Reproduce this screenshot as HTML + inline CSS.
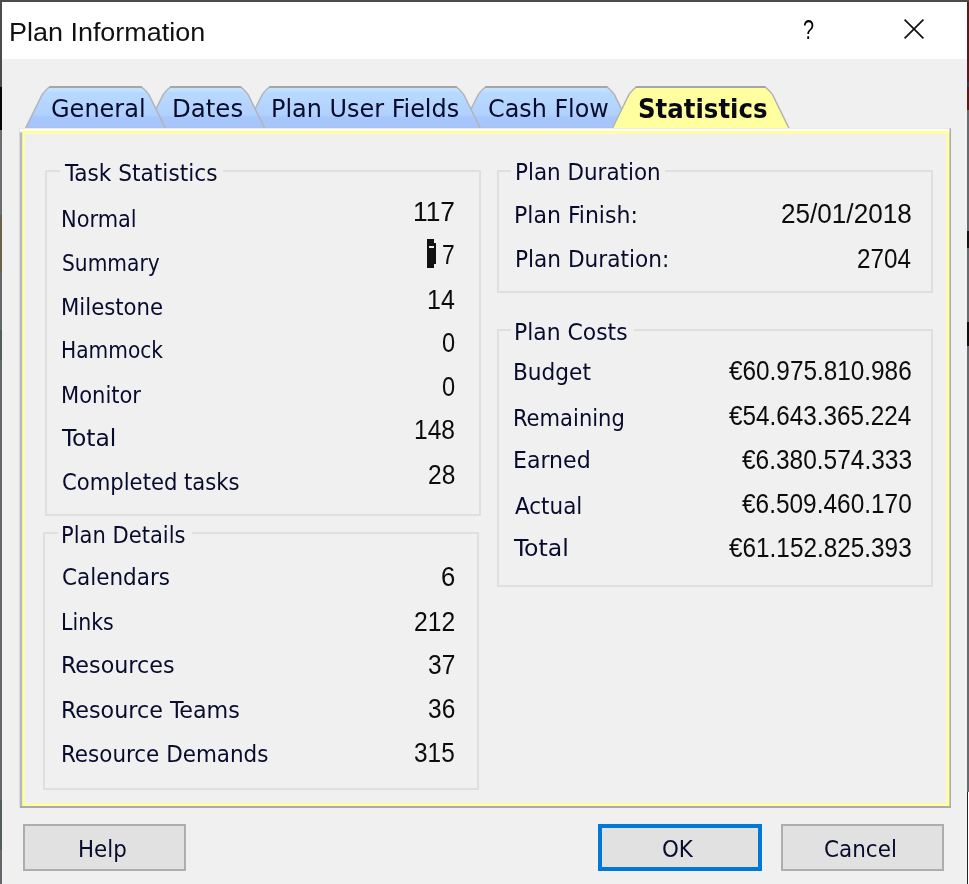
<!DOCTYPE html>
<html lang="en">
<head>
<meta charset="utf-8">
<title>Plan Information</title>
<style>
html,body{margin:0;padding:0}
body{width:969px;height:884px;overflow:hidden;background:#f0f0f0;position:relative;font-family:"Liberation Sans",sans-serif}
#win{position:absolute;left:0;top:0;width:969px;height:884px;overflow:hidden;background:#f0f0f0}
#client{position:absolute;left:0;top:0;width:969px;height:884px;filter:blur(0.4px)}
.abs{position:absolute}
.t{position:absolute;white-space:nowrap;transform-origin:0 0;display:block}
#edge-top{left:0;top:0;width:969px;height:2px;background:#4b4b4b}
#edge-left{left:0;top:0;width:2px;height:884px;background:linear-gradient(#4b4b4b 0,#4b4b4b 87px,#080808 87px,#080808 130px,#6a6e72 130px,#6a6e72 215px,#6b6148 215px,#6b6148 272px,#63676b 272px,#63676b 330px,#4f5f55 330px,#4f5f55 360px,#63676b 360px,#63676b 800px,#4f5f55 800px,#4f5f55 850px,#63676b 850px)}
#edge-right{left:967px;top:0;width:2px;height:884px;background:linear-gradient(#4b4b4b 0,#4b4b4b 2px,#5c1b1b 2px,#5c1b1b 82px,#3a3550 82px,#3a3550 87px,#5c1b1b 87px,#5c1b1b 110px,#676b70 110px,#676b70 231px,#151515 231px,#151515 248px,#676b70 248px,#676b70 322px,#101010 322px,#101010 346px,#676b70 346px,#676b70 792px,#222 792px,#222 884px)}
#edge-right2{left:968px;top:792px;width:1px;height:92px;background:#fff}
#titlebar{left:2px;top:2px;width:965px;height:57px;background:#fff}
.grp{position:absolute;box-sizing:border-box;border:2px solid #dfdfdf}
.gcap{position:absolute;background:#f0f0f0;height:6px}
.btn{position:absolute;box-sizing:border-box;border:2px solid #adadad;background:#e1e1e1}
.btn.def{border:4px solid #0078d7}
</style>
</head>
<body>
<div id="win">
<div id="client">

<svg class="abs" id="tabs" style="left:0;top:80px" width="969" height="52" viewBox="0 80 969 52">
<defs><linearGradient id="tg" x1="0" y1="0" x2="0" y2="1"><stop offset="0" stop-color="#c4e4ff"/><stop offset="0.1" stop-color="#bfe0ff"/><stop offset="0.14" stop-color="#b8d9ff"/><stop offset="0.66" stop-color="#b1d1fe"/><stop offset="0.74" stop-color="#a7c7fc"/><stop offset="1" stop-color="#a6c6fb"/></linearGradient></defs>
<path d="M461.5 128.6 L478.3 94.4 Q483.1 88.5 486.1 86.9 L606.5 86.9 Q609.5 88.5 614.3 94.4 L631.1 128.6 Z" fill="url(#tg)" stroke="#b2b4ba" stroke-width="1.5"/>
<path d="M485.1 87 L607.5 87" stroke="#a6a6a6" stroke-width="2" fill="none"/>
<path d="M245.5 128.6 L262.3 94.4 Q267.1 88.5 270.1 86.9 L455.9 86.9 Q458.9 88.5 463.7 94.4 L480.5 128.6 Z" fill="url(#tg)" stroke="#b2b4ba" stroke-width="1.5"/>
<path d="M269.1 87 L456.9 87" stroke="#a6a6a6" stroke-width="2" fill="none"/>
<path d="M146.4 128.6 L163.2 94.4 Q168.0 88.5 171.0 86.9 L240.2 86.9 Q243.2 88.5 248.0 94.4 L264.8 128.6 Z" fill="url(#tg)" stroke="#b2b4ba" stroke-width="1.5"/>
<path d="M170.0 87 L241.2 87" stroke="#a6a6a6" stroke-width="2" fill="none"/>
<path d="M25.4 128.6 L42.2 94.4 Q47.0 88.5 50.0 86.9 L141.0 86.9 Q144.0 88.5 148.8 94.4 L165.6 128.6 Z" fill="url(#tg)" stroke="#b2b4ba" stroke-width="1.5"/>
<path d="M49.0 87 L142.0 87" stroke="#a6a6a6" stroke-width="2" fill="none"/>
<path d="M611.6 130.0 L629.0 94.4 Q633.8 88.5 636.8 86.9 L764.6 86.9 Q767.6 88.5 772.4 94.4 L789.8 130.0 Z" fill="#ffff9f" stroke="#b4b4ae" stroke-width="1.5"/>
<path d="M635.8 87 L765.6 87" stroke="#a6a6a0" stroke-width="2" fill="none"/>
</svg>

<svg class="abs" id="panel" style="left:0;top:120px" width="969" height="700" viewBox="0 120 969 700">
<rect x="19.8" y="128.3" width="931.2" height="679.7" fill="#aaaab0"/>
<rect x="19.8" y="128.3" width="929.6" height="677.7" fill="#b8b8bc"/>
<rect x="19.8" y="128.3" width="929.6" height="4" fill="#ffffff"/>
<rect x="22.2" y="130.7" width="927.2" height="675.3" fill="#ffff9e"/>
<rect x="24.7" y="133.8" width="921.7" height="669.6" fill="#f0f0f0"/>
</svg>

<!-- group boxes -->
<div class="grp" style="left:45px;top:170px;width:436px;height:346px"></div>
<div class="grp" style="left:43px;top:532px;width:436px;height:258px"></div>
<div class="grp" style="left:497px;top:170px;width:436px;height:123px"></div>
<div class="grp" style="left:497px;top:329px;width:436px;height:258px"></div>
<div class="gcap" style="left:60px;top:168px;width:163px"></div>
<div class="gcap" style="left:58px;top:530px;width:134px"></div>
<div class="gcap" style="left:511px;top:168px;width:154px"></div>
<div class="gcap" style="left:511px;top:327px;width:123px"></div>

<!-- text cursor block over the "1" of 17 -->


<!-- buttons -->
<div class="btn" style="left:23px;top:824px;width:163px;height:47px"></div>
<div class="btn def" style="left:598px;top:824px;width:164px;height:47px"></div>
<div class="btn" style="left:781px;top:824px;width:163px;height:47px"></div>

<span class="t" style='left:51.15px;top:96.24px;font:400 25.5px/25.5px "DejaVu Sans Condensed", "Liberation Sans", sans-serif;color:#080c2c;transform:scaleX(1.0463)'>General</span>
<span class="t" style='left:172.30px;top:96.45px;font:400 25.5px/25.5px "DejaVu Sans Condensed", "Liberation Sans", sans-serif;color:#080c2c;transform:scaleX(1.0653)'>Dates</span>
<span class="t" style='left:271.31px;top:96.24px;font:400 25.5px/25.5px "DejaVu Sans Condensed", "Liberation Sans", sans-serif;color:#080c2c;transform:scaleX(1.0430)'>Plan User Fields</span>
<span class="t" style='left:488.11px;top:96.25px;font:400 25.5px/25.5px "DejaVu Sans Condensed", "Liberation Sans", sans-serif;color:#080c2c;transform:scaleX(1.0396)'>Cash Flow</span>
<span class="t" style='left:637.96px;top:94.87px;font:700 27px/27px "DejaVu Sans Condensed", "Liberation Sans", sans-serif;color:#0a0a14;transform:scaleX(1.0062)'>Statistics</span>
<span class="t" style='left:65.43px;top:161.55px;font:400 23.5px/23.5px "DejaVu Sans Condensed", "Liberation Sans", sans-serif;color:#080c2c;transform:scaleX(1.0259)'>Task Statistics</span>
<span class="t" style='left:60.81px;top:523.86px;font:400 23.5px/23.5px "DejaVu Sans Condensed", "Liberation Sans", sans-serif;color:#080c2c;transform:scaleX(0.9965)'>Plan Details</span>
<span class="t" style='left:514.57px;top:160.65px;font:400 23.5px/23.5px "DejaVu Sans Condensed", "Liberation Sans", sans-serif;color:#080c2c;transform:scaleX(1.0149)'>Plan Duration</span>
<span class="t" style='left:514.43px;top:321.19px;font:400 23.5px/23.5px "DejaVu Sans Condensed", "Liberation Sans", sans-serif;color:#080c2c;transform:scaleX(1.0350)'>Plan Costs</span>
<span class="t" style='left:60.78px;top:207.83px;font:400 23px/23px "DejaVu Sans Condensed", "Liberation Sans", sans-serif;color:#080c2c;transform:scaleX(1.0116)'>Normal</span>
<span class="t" style='left:61.66px;top:251.62px;font:400 23px/23px "DejaVu Sans Condensed", "Liberation Sans", sans-serif;color:#080c2c;transform:scaleX(0.9770)'>Summary</span>
<span class="t" style='left:60.74px;top:295.81px;font:400 23px/23px "DejaVu Sans Condensed", "Liberation Sans", sans-serif;color:#080c2c;transform:scaleX(1.0263)'>Milestone</span>
<span class="t" style='left:60.82px;top:338.88px;font:400 23px/23px "DejaVu Sans Condensed", "Liberation Sans", sans-serif;color:#080c2c;transform:scaleX(0.9759)'>Hammock</span>
<span class="t" style='left:60.76px;top:383.80px;font:400 23px/23px "DejaVu Sans Condensed", "Liberation Sans", sans-serif;color:#080c2c;transform:scaleX(1.0174)'>Monitor</span>
<span class="t" style='left:62.04px;top:427.30px;font:400 23px/23px "DejaVu Sans Condensed", "Liberation Sans", sans-serif;color:#080c2c;transform:scaleX(1.1337)'>Total</span>
<span class="t" style='left:61.88px;top:470.50px;font:400 23px/23px "DejaVu Sans Condensed", "Liberation Sans", sans-serif;color:#080c2c;transform:scaleX(1.0221)'>Completed tasks</span>
<span class="t" style='left:61.68px;top:566.03px;font:400 23px/23px "DejaVu Sans Condensed", "Liberation Sans", sans-serif;color:#080c2c;transform:scaleX(1.0399)'>Calendars</span>
<span class="t" style='left:60.91px;top:610.60px;font:400 23px/23px "DejaVu Sans Condensed", "Liberation Sans", sans-serif;color:#080c2c;transform:scaleX(0.9926)'>Links</span>
<span class="t" style='left:60.75px;top:653.70px;font:400 23px/23px "DejaVu Sans Condensed", "Liberation Sans", sans-serif;color:#080c2c;transform:scaleX(1.0755)'>Resources</span>
<span class="t" style='left:60.60px;top:698.54px;font:400 23px/23px "DejaVu Sans Condensed", "Liberation Sans", sans-serif;color:#080c2c;transform:scaleX(1.0748)'>Resource Teams</span>
<span class="t" style='left:60.94px;top:742.82px;font:400 23px/23px "DejaVu Sans Condensed", "Liberation Sans", sans-serif;color:#080c2c;transform:scaleX(1.0380)'>Resource Demands</span>
<span class="t" style='left:514.38px;top:203.59px;font:400 23px/23px "DejaVu Sans Condensed", "Liberation Sans", sans-serif;color:#080c2c;transform:scaleX(1.0650)'>Plan Finish:</span>
<span class="t" style='left:514.51px;top:247.50px;font:400 23px/23px "DejaVu Sans Condensed", "Liberation Sans", sans-serif;color:#080c2c;transform:scaleX(1.0463)'>Plan Duration:</span>
<span class="t" style='left:512.51px;top:360.80px;font:400 23px/23px "DejaVu Sans Condensed", "Liberation Sans", sans-serif;color:#080c2c;transform:scaleX(1.0466)'>Budget</span>
<span class="t" style='left:512.60px;top:406.84px;font:400 23px/23px "DejaVu Sans Condensed", "Liberation Sans", sans-serif;color:#080c2c;transform:scaleX(1.0190)'>Remaining</span>
<span class="t" style='left:513.27px;top:449.31px;font:400 23px/23px "DejaVu Sans Condensed", "Liberation Sans", sans-serif;color:#080c2c;transform:scaleX(1.0661)'>Earned</span>
<span class="t" style='left:514.58px;top:494.87px;font:400 23px/23px "DejaVu Sans Condensed", "Liberation Sans", sans-serif;color:#080c2c;transform:scaleX(1.0391)'>Actual</span>
<span class="t" style='left:514.48px;top:537.47px;font:400 23px/23px "DejaVu Sans Condensed", "Liberation Sans", sans-serif;color:#080c2c;transform:scaleX(1.1418)'>Total</span>
<span class="t" style='left:413.47px;top:197.80px;font:400 28px/28px "Liberation Sans", sans-serif;color:#0c0c0c;transform:scaleX(0.9418)'>117</span>
<span class="t" style='left:428.05px;top:240.10px;font:400 28px/28px "Liberation Sans", sans-serif;color:#111;transform:scaleX(0.3231)'>1</span>
<span class="t" style='left:442.14px;top:240.71px;font:400 28px/28px "Liberation Sans", sans-serif;color:#0c0c0c;transform:scaleX(0.8124)'>7</span>
<span class="t" style='left:427.37px;top:285.80px;font:400 28px/28px "Liberation Sans", sans-serif;color:#0c0c0c;transform:scaleX(0.8919)'>14</span>
<span class="t" style='left:441.70px;top:328.98px;font:400 28px/28px "Liberation Sans", sans-serif;color:#0c0c0c;transform:scaleX(0.8417)'>0</span>
<span class="t" style='left:441.70px;top:372.86px;font:400 28px/28px "Liberation Sans", sans-serif;color:#0c0c0c;transform:scaleX(0.8417)'>0</span>
<span class="t" style='left:413.64px;top:415.80px;font:400 28px/28px "Liberation Sans", sans-serif;color:#0c0c0c;transform:scaleX(0.8789)'>148</span>
<span class="t" style='left:427.90px;top:460.74px;font:400 28px/28px "Liberation Sans", sans-serif;color:#0c0c0c;transform:scaleX(0.8758)'>28</span>
<span class="t" style='left:441.20px;top:562.65px;font:400 28px/28px "Liberation Sans", sans-serif;color:#0c0c0c;transform:scaleX(0.9174)'>6</span>
<span class="t" style='left:414.19px;top:607.68px;font:400 28px/28px "Liberation Sans", sans-serif;color:#0c0c0c;transform:scaleX(0.8806)'>212</span>
<span class="t" style='left:428.06px;top:650.54px;font:400 28px/28px "Liberation Sans", sans-serif;color:#0c0c0c;transform:scaleX(0.8761)'>37</span>
<span class="t" style='left:427.87px;top:695.24px;font:400 28px/28px "Liberation Sans", sans-serif;color:#0c0c0c;transform:scaleX(0.8752)'>36</span>
<span class="t" style='left:414.35px;top:738.81px;font:400 28px/28px "Liberation Sans", sans-serif;color:#0c0c0c;transform:scaleX(0.8714)'>315</span>
<span class="t" style='left:780.98px;top:199.75px;font:400 28px/28px "Liberation Sans", sans-serif;color:#0c0c0c;transform:scaleX(0.9330)'>25/01/2018</span>
<span class="t" style='left:857.45px;top:244.54px;font:400 28px/28px "Liberation Sans", sans-serif;color:#0c0c0c;transform:scaleX(0.8649)'>2704</span>
<span class="t" style='left:729.40px;top:357.36px;font:400 28px/28px "Liberation Sans", sans-serif;color:#0c0c0c;transform:scaleX(0.8691)'>€60.975.810.986</span>
<span class="t" style='left:729.29px;top:402.25px;font:400 28px/28px "Liberation Sans", sans-serif;color:#0c0c0c;transform:scaleX(0.8667)'>€54.643.365.224</span>
<span class="t" style='left:742.29px;top:445.62px;font:400 28px/28px "Liberation Sans", sans-serif;color:#0c0c0c;transform:scaleX(0.8736)'>€6.380.574.333</span>
<span class="t" style='left:742.29px;top:489.78px;font:400 28px/28px "Liberation Sans", sans-serif;color:#0c0c0c;transform:scaleX(0.8721)'>€6.509.460.170</span>
<span class="t" style='left:729.40px;top:533.64px;font:400 28px/28px "Liberation Sans", sans-serif;color:#0c0c0c;transform:scaleX(0.8691)'>€61.152.825.393</span>
<span class="t" style='left:78.29px;top:837.99px;font:400 23px/23px "DejaVu Sans Condensed", "Liberation Sans", sans-serif;color:#080c2c;transform:scaleX(1.0318)'>Help</span>
<span class="t" style='left:661.71px;top:837.66px;font:400 23px/23px "DejaVu Sans Condensed", "Liberation Sans", sans-serif;color:#080c2c;transform:scaleX(1.0362)'>OK</span>
<span class="t" style='left:823.76px;top:837.50px;font:400 23px/23px "DejaVu Sans Condensed", "Liberation Sans", sans-serif;color:#080c2c;transform:scaleX(1.0392)'>Cancel</span>
<div class="abs" style="left:427px;top:239px;width:7px;height:29px;background:#111"></div><div class="abs" style="left:433px;top:243px;width:3px;height:21px;background:#111"></div><div class="abs" style="left:429px;top:246px;width:5px;height:2px;background:#e8e8e8"></div>
</div>
<!-- window chrome (title bar, edges) -->
<div class="abs" id="titlebar"></div>
<div class="abs" id="edge-top"></div>
<div class="abs" id="edge-left"></div>
<div class="abs" id="edge-right"></div>
<div class="abs" id="edge-right2"></div>
<svg class="abs" style="left:900px;top:15px" width="28" height="28" viewBox="0 0 28 28"><path d="M4.6 4.6 L23.4 23.4 M23.4 4.6 L4.6 23.4" stroke="#111" stroke-width="1.7" fill="none"/></svg>
<span class="t" style='left:9.07px;top:18.65px;font:400 26.5px/26.5px "Liberation Sans", sans-serif;color:#111;transform:scaleX(1.0167)'>Plan Information</span>
<span class="t" style='left:803.20px;top:16.84px;font:400 27px/27px "Liberation Sans", sans-serif;color:#000;transform:scaleX(0.7342)'>?</span>
</div>
</body>
</html>
